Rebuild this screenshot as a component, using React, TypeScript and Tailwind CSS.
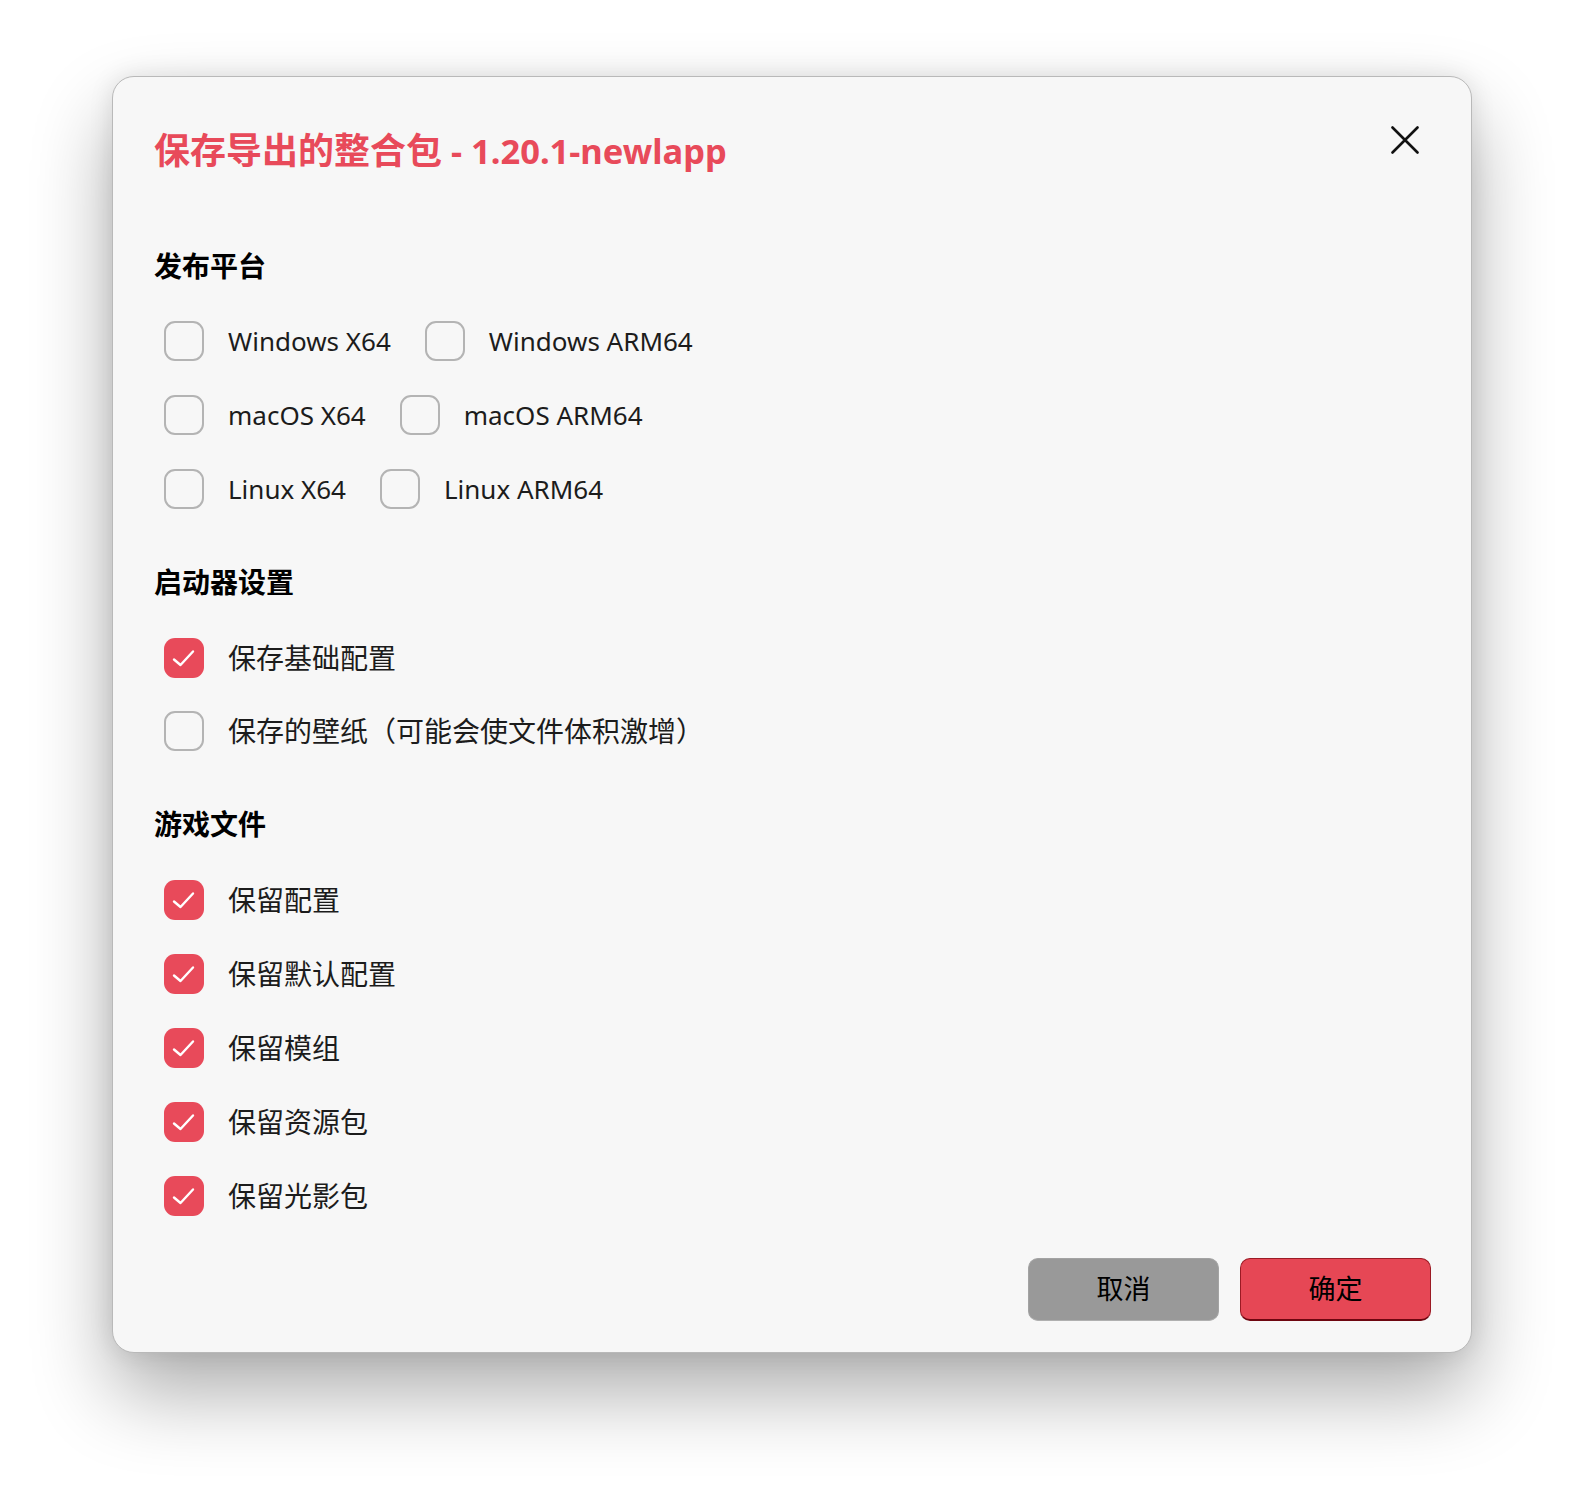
import React from "react";

const FONT = { fontFamily: '"Noto Sans", "Noto Sans CJK SC", sans-serif' };

function Box({ checked }: { checked: boolean }) {
  if (checked) {
    return (
      <div className="w-[40px] h-[40px] shrink-0 rounded-[11px] bg-[#e84a5a] flex items-center justify-center">
        <svg width="40" height="40" viewBox="0 0 40 40" fill="none">
          <path d="M10 21.5 L16.5 27 L29 13.5" stroke="#fff" strokeWidth="2.4" strokeLinecap="round" strokeLinejoin="round" />
        </svg>
      </div>
    );
  }
  return <div className="w-[40px] h-[40px] shrink-0 rounded-[11px] border-2 border-[#b4b4b4]" />;
}

function Item({ label, checked = false, latin = false }: { label: string; checked?: boolean; latin?: boolean }) {
  return (
    <div className="flex items-center gap-[24px] h-[40px]">
      <Box checked={checked} />
      <span
        className={
          (latin ? "text-[26px] " : "text-[28px] ") + "leading-[40px] text-[#1c1c1c] whitespace-nowrap"
        }
      >
        {label}
      </span>
    </div>
  );
}

function Row({ children }: { children: React.ReactNode }) {
  return <div className="flex items-center gap-[34px] ml-[10px]">{children}</div>;
}

function Heading({ children, className = "" }: { children: React.ReactNode; className?: string }) {
  return <div className={"text-[28px] leading-[36px] font-bold text-black " + className}>{children}</div>;
}

export default function App() {
  return (
    <div className="w-[1584px] h-[1500px] bg-white pt-[76px]" style={FONT}>
      <div className="mx-auto w-[1360px] bg-[#f7f7f7] rounded-[22px] border border-[#b9b9b9] shadow-[0_40px_80px_rgba(0,0,0,0.32),0_0_24px_rgba(0,0,0,0.10)] pl-[41px] pr-[40px] pt-[50px] pb-[31px] flex flex-col">
        <div className="flex items-start justify-between">
          <h1 className="text-[36px] leading-[48px] font-bold text-[#e84a5a] whitespace-nowrap">
            保存导出的整合包<span className="text-[34.5px]"> - 1.20.1-newlapp</span>
          </h1>
          <button className="mr-[12px] -mt-[1px] w-[28px] h-[28px] flex items-center justify-center">
            <svg width="28" height="28" viewBox="0 0 28 28" fill="none">
              <path d="M1.5 1.5 L26.5 26.5 M26.5 1.5 L1.5 26.5" stroke="#111" strokeWidth="2.6" strokeLinecap="round" />
            </svg>
          </button>
        </div>

        <Heading className="mt-[73px]">发布平台</Heading>
        <div className="mt-[37px] flex flex-col gap-[34px]">
          <Row>
            <Item label="Windows X64" latin />
            <Item label="Windows ARM64" latin />
          </Row>
          <Row>
            <Item label="macOS X64" latin />
            <Item label="macOS ARM64" latin />
          </Row>
          <Row>
            <Item label="Linux X64" latin />
            <Item label="Linux ARM64" latin />
          </Row>
        </div>

        <Heading className="mt-[55px]">启动器设置</Heading>
        <div className="mt-[38px] flex flex-col gap-[33px]">
          <Row>
            <Item label="保存基础配置" checked />
          </Row>
          <Row>
            <Item label="保存的壁纸（可能会使文件体积激增）" />
          </Row>
        </div>

        <Heading className="mt-[55px]">游戏文件</Heading>
        <div className="mt-[38px] flex flex-col gap-[34px]">
          <Row>
            <Item label="保留配置" checked />
          </Row>
          <Row>
            <Item label="保留默认配置" checked />
          </Row>
          <Row>
            <Item label="保留模组" checked />
          </Row>
          <Row>
            <Item label="保留资源包" checked />
          </Row>
          <Row>
            <Item label="保留光影包" checked />
          </Row>
        </div>

        <div className="mt-[42px] flex justify-end gap-[21px]">
          <button className="w-[191px] h-[63px] rounded-[10px] bg-[#999999] border border-[#a3a3a3] border-b-[#b0b0b0] text-[27px] text-black">
            取消
          </button>
          <button className="w-[191px] h-[63px] rounded-[10px] bg-[#e64755] border border-[#9b1a24] border-b-2 border-b-[#6e0610] text-[27px] text-black">
            确定
          </button>
        </div>
      </div>
    </div>
  );
}
